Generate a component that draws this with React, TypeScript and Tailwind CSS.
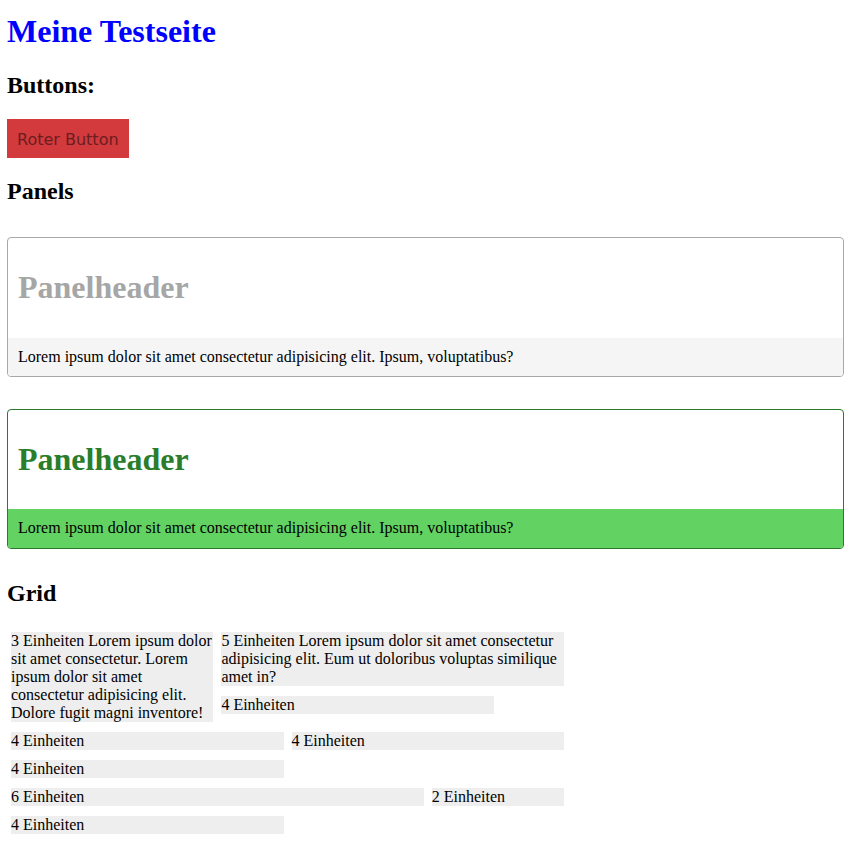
export default function App() {
  const serif = "font-['Liberation_Serif','Times_New_Roman',serif]";
  return (
    <div className={`${serif} px-[7px] pt-[13px] pb-[8px] text-[16px] text-black bg-white`}>
      <h1 className="text-[32px] leading-[37px] font-bold text-[#0000ff]">Meine Testseite</h1>

      <h2 className="mt-[21px] text-[24px] leading-[28px] font-bold">Buttons:</h2>
      <div className="mt-[20px] flex">
        <button className="bg-[#d33a3d] px-[10px] pt-[11px] pb-[9px] font-['DejaVu_Sans',sans-serif] text-[16px] leading-[19px] text-[#6b1d1f]">
          Roter Button
        </button>
      </div>

      <h2 className="mt-[19px] text-[24px] leading-[28px] font-bold">Panels</h2>

      <div className="mt-[32px] rounded-[4px] border border-[#a8a8a8] overflow-hidden">
        <div className="px-[10px] pt-[31px] pb-[32px]">
          <h1 className="text-[32px] leading-[37px] font-bold text-[#a6a6a6]">Panelheader</h1>
        </div>
        <p className="bg-[#f5f5f5] p-[10px] leading-[18px]">
          Lorem ipsum dolor sit amet consectetur adipisicing elit. Ipsum, voluptatibus?
        </p>
      </div>

      <div className="mt-[32px] rounded-[4px] border border-[#2b7a2b] overflow-hidden">
        <div className="px-[10px] pt-[31px] pb-[31px]">
          <h1 className="text-[32px] leading-[37px] font-bold text-[#2a7d2a]">Panelheader</h1>
        </div>
        <p className="bg-[#62d262] pt-[10px] pb-[11px] px-[10px] leading-[18px]">
          Lorem ipsum dolor sit amet consectetur adipisicing elit. Ipsum, voluptatibus?
        </p>
      </div>

      <h2 className="mt-[30px] text-[24px] leading-[28px] font-bold">Grid</h2>

      <div className="mt-[25px] ml-[4px] w-[553px] grid grid-cols-8 gap-x-[8px] gap-y-[10px] leading-[18px]">
        <div className="col-span-3 bg-[#eeeeee]">
          3 Einheiten Lorem ipsum dolor sit amet consectetur. Lorem ipsum dolor sit amet consectetur adipisicing elit. Dolore fugit magni inventore!
        </div>
        <div className="col-span-5 flex flex-col gap-[10px]">
          <div className="bg-[#eeeeee]">
            5 Einheiten Lorem ipsum dolor sit amet consectetur adipisicing elit. Eum ut doloribus voluptas similique amet in?
          </div>
          <div className="grid grid-cols-5 gap-x-[8px]">
            <div className="col-span-4 bg-[#eeeeee]">4 Einheiten</div>
          </div>
        </div>

        <div className="col-span-4 bg-[#eeeeee]">4 Einheiten</div>
        <div className="col-span-4 bg-[#eeeeee]">4 Einheiten</div>

        <div className="col-span-4 bg-[#eeeeee]">4 Einheiten</div>
        <div className="col-span-4" />

        <div className="col-span-6 bg-[#eeeeee]">6 Einheiten</div>
        <div className="col-span-2 bg-[#eeeeee]">2 Einheiten</div>

        <div className="col-span-4 bg-[#eeeeee]">4 Einheiten</div>
      </div>
    </div>
  );
}
